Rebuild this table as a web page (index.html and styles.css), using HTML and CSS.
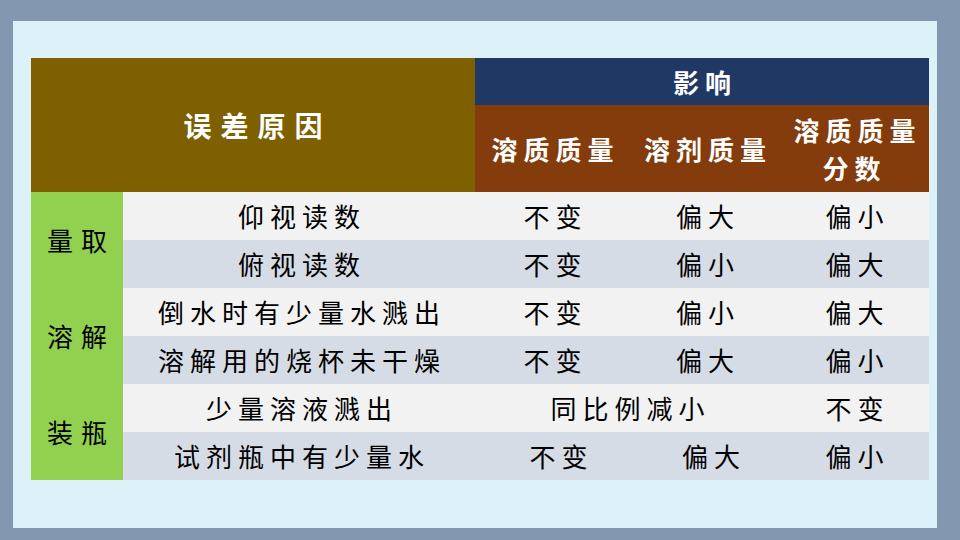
FILE: index.html
```html
<!DOCTYPE html>
<html lang="zh">
<head>
<meta charset="utf-8">
<link rel="stylesheet" href="styles.css">
</head>
<body>
<div class="panel">
  <table class="grid">
    <colgroup>
      <col class="c-group">
      <col class="c-cause">
      <col class="c-v1">
      <col class="c-v2">
      <col class="c-v3">
    </colgroup>
    <thead>
      <tr class="h1">
        <th class="cause-head" colspan="2" rowspan="2">误差原因</th>
        <th class="effect-head" colspan="3">影响</th>
      </tr>
      <tr class="h2">
        <th class="sub">溶质质量</th>
        <th class="sub">溶剂质量</th>
        <th class="sub">溶质质量<br>分数</th>
      </tr>
    </thead>
    <tbody>
      <tr class="light">
        <td class="group" rowspan="2">量取</td>
        <td>仰视读数</td><td>不变</td><td>偏大</td><td>偏小</td>
      </tr>
      <tr class="dark">
        <td>俯视读数</td><td>不变</td><td>偏小</td><td>偏大</td>
      </tr>
      <tr class="light">
        <td class="group" rowspan="2">溶解</td>
        <td>倒水时有少量水溅出</td><td>不变</td><td>偏小</td><td>偏大</td>
      </tr>
      <tr class="dark">
        <td>溶解用的烧杯未干燥</td><td>不变</td><td>偏大</td><td>偏小</td>
      </tr>
      <tr class="light">
        <td class="group" rowspan="2">装瓶</td>
        <td>少量溶液溅出</td><td colspan="2">同比例减小</td><td>不变</td>
      </tr>
      <tr class="dark">
        <td>试剂瓶中有少量水</td><td class="shift">不变</td><td class="shift">偏大</td><td>偏小</td>
      </tr>
    </tbody>
  </table>
</div>
</body>
</html>
```
FILE: styles.css
```css
html, body {
  margin: 0;
  padding: 0;
}
body {
  width: 960px;
  height: 540px;
  background: #8497b0;
  overflow: hidden;
  font-family: "Noto Sans CJK SC", "Noto Sans", sans-serif;
}
.panel {
  margin: 21px 0 0 13px;
  width: 924px;
  height: 507px;
  background: #ddf2f8;
  padding: 37px 0 0 18px;
  box-sizing: border-box;
}
.grid {
  border-collapse: collapse;
  table-layout: fixed;
  width: 898px;
}
.c-group { width: 92px; }
.c-cause { width: 352px; }
.c-v1 { width: 155px; }
.c-v2 { width: 150px; }
.c-v3 { width: 149px; }
.grid th, .grid td {
  padding: 0;
  text-align: center;
  vertical-align: middle;
}
.h1 { height: 47px; }
.h2 { height: 87px; }
.cause-head {
  background: #7f6000;
  color: #fff;
  font-size: 28px;
  font-weight: 700;
  letter-spacing: 9px;
  text-indent: 9px;
}
.effect-head {
  background: #203864;
  color: #fff;
  font-size: 26px;
  font-weight: 700;
  letter-spacing: 6px;
  text-indent: 6px;
}
.sub {
  background: #843c0c;
  color: #fff;
  font-size: 26px;
  font-weight: 700;
  letter-spacing: 6px;
  text-indent: 6px;
  line-height: 38px;
}
tbody tr { height: 48px; }
tbody td {
  font-size: 26px;
  color: #000;
  letter-spacing: 6px;
  text-indent: 6px;
  line-height: 30px;
}
.light td { background: #f2f2f2; }
.dark td { background: #d6dce5; }
.grid td.group {
  background: #92d050;
  letter-spacing: 8px;
  text-indent: 8px;
}
.grid td.shift { text-indent: 18px; }
```
